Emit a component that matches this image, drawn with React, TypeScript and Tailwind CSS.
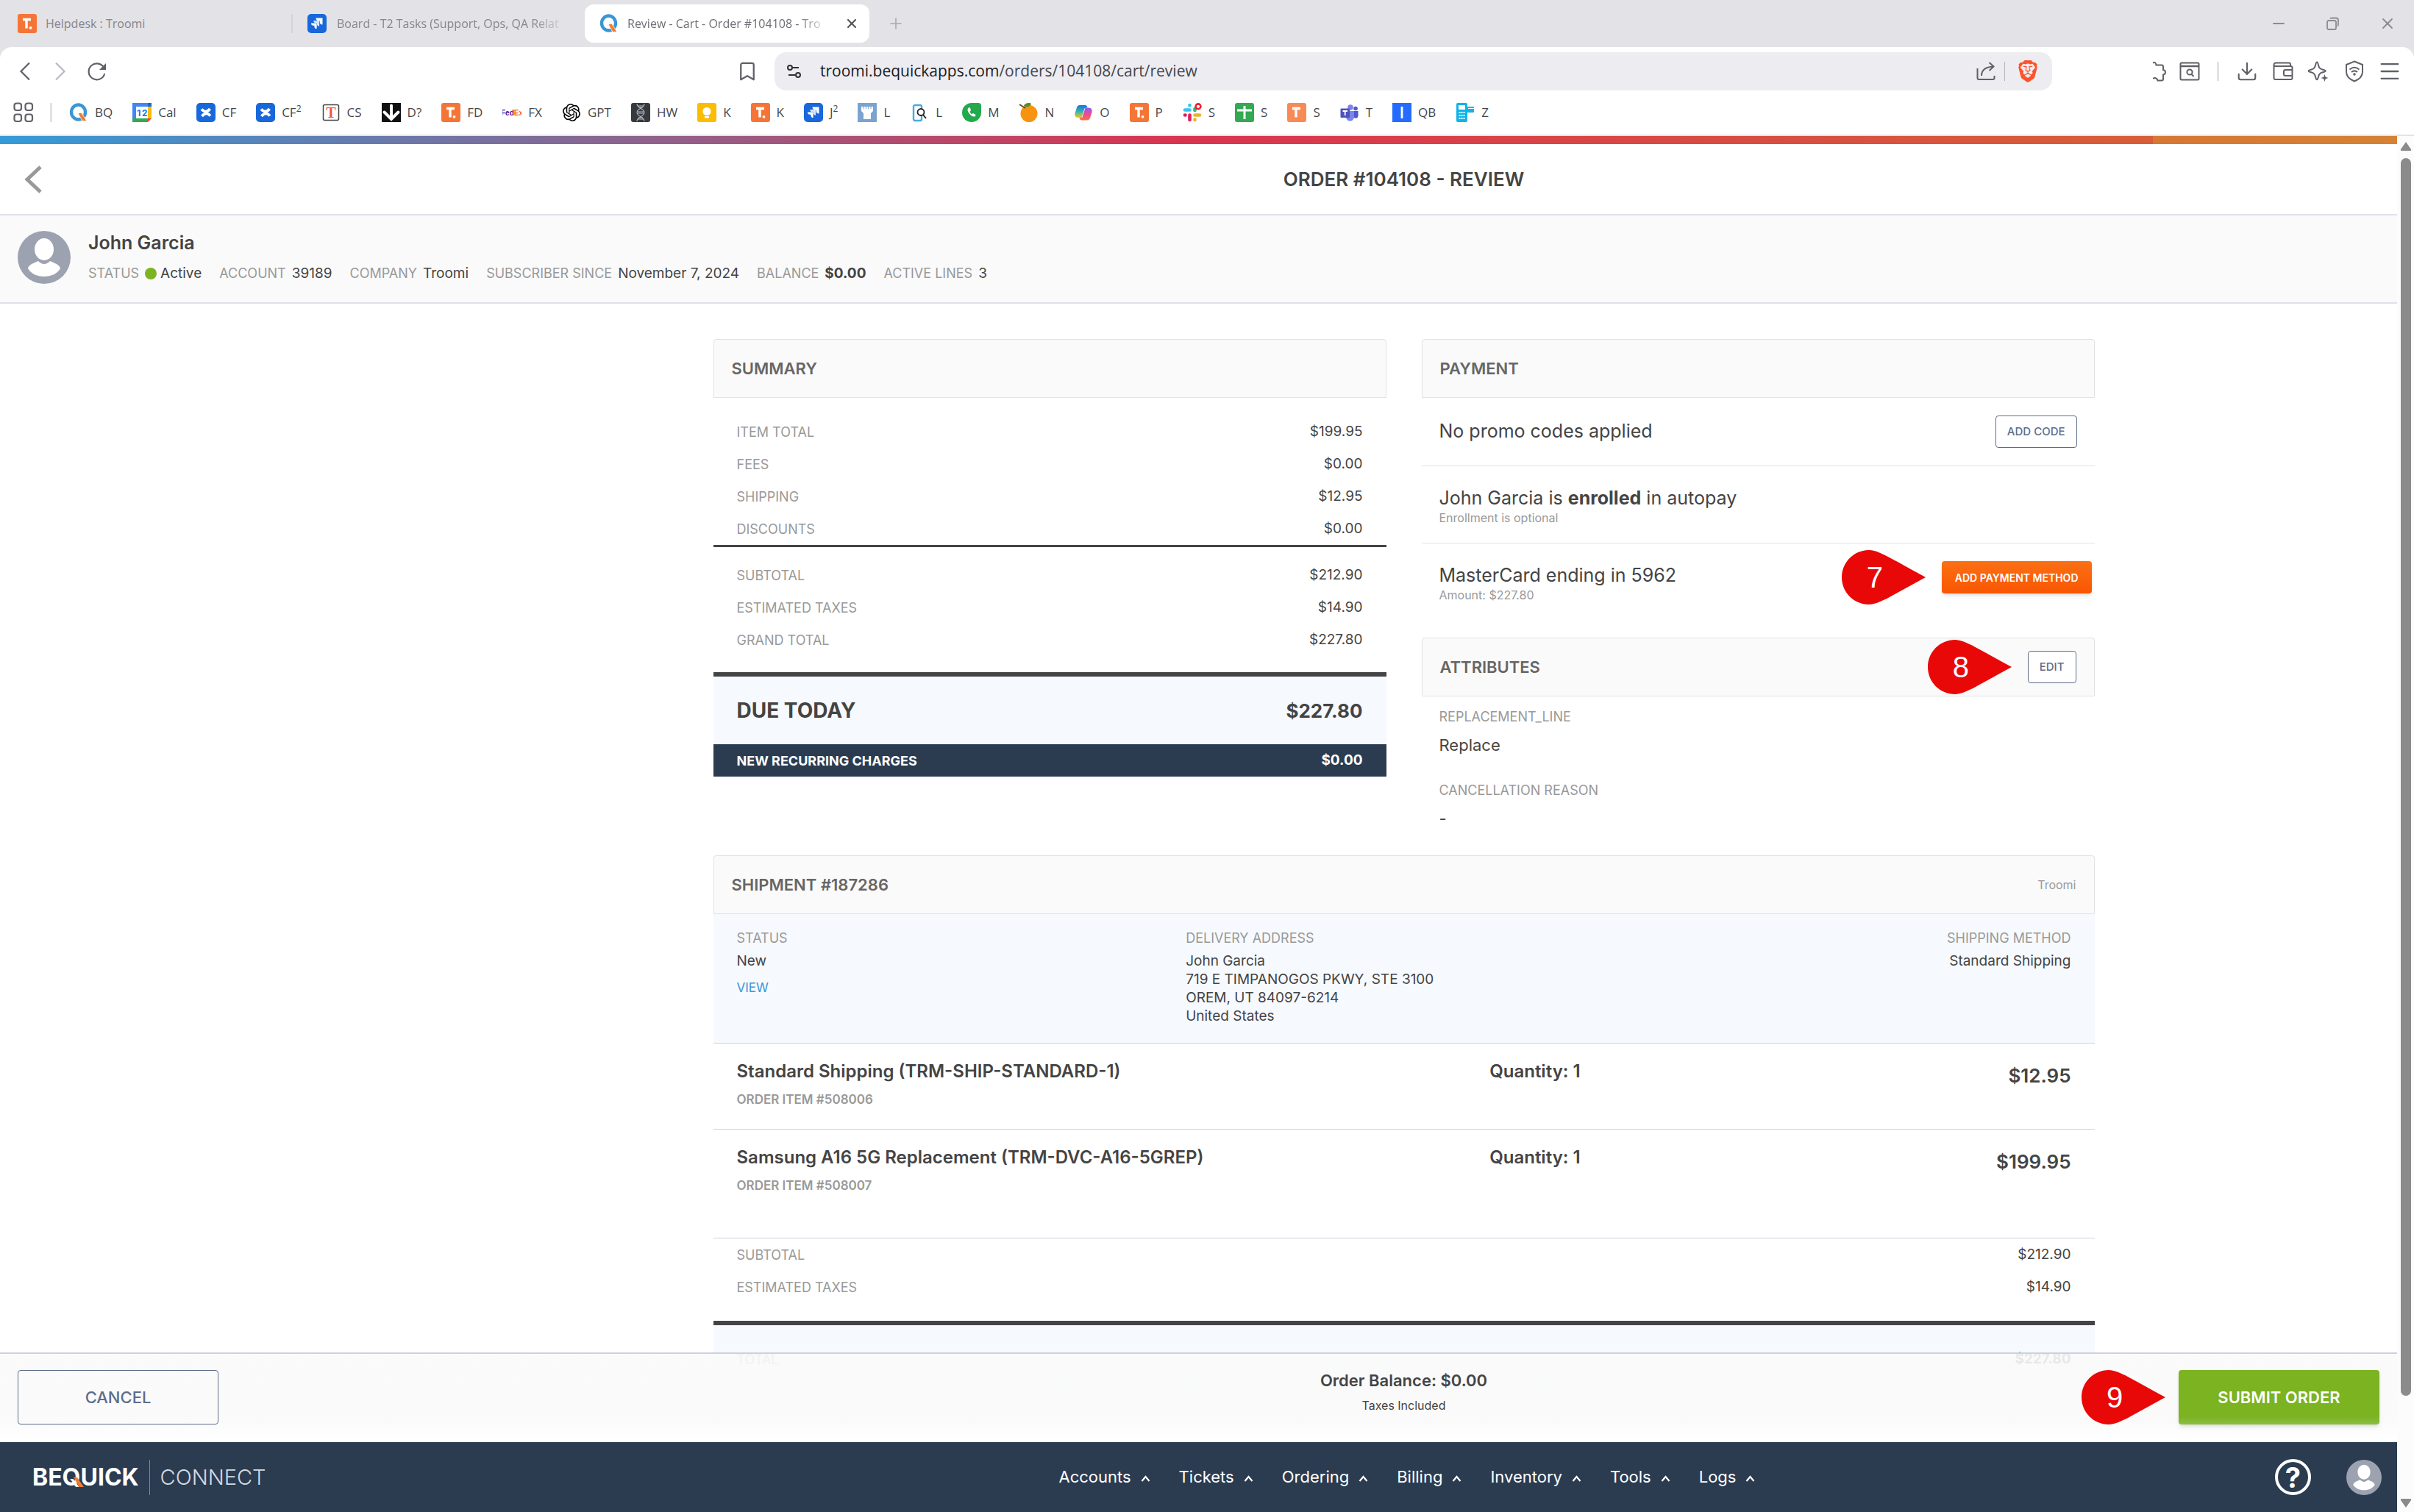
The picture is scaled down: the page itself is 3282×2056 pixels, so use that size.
import type { ReactNode } from "react";
import {
  Bookmark,
  Download,
  Menu,
  Minus,
  Plus,
  X,
} from "lucide-react";
import { SiBrave, SiOpenai } from "react-icons/si";

/* ---------- Favicons ---------- */

function TroomiIcon({ light = false }: { light?: boolean }) {
  return (
    <svg viewBox="0 0 26 26" className="size-[26px] shrink-0" aria-hidden="true">
      <rect width="26" height="26" rx="3" fill={light ? "#f88a55" : "#f57536"} />
      <path d="M7 7.5h11M12 7.5v12" stroke="#fff" strokeWidth="3.4" fill="none" />
      {!light && <circle cx="17.5" cy="18.8" r="1.9" fill="#fff" />}
    </svg>
  );
}

function BeQuickIcon() {
  return (
    <svg viewBox="0 0 26 26" className="size-[26px] shrink-0" aria-hidden="true">
      <ellipse cx="12.5" cy="12.5" rx="9.5" ry="10" fill="none" stroke="#3a97d3" strokeWidth="4.4" />
      <path d="M12 14l4.5-1 7.5 11.5h-6z" fill="#f07b2f" stroke="#fff" strokeWidth="0.8" />
    </svg>
  );
}

function JiraIcon() {
  return (
    <svg viewBox="0 0 26 26" className="size-[26px] shrink-0" aria-hidden="true">
      <rect width="26" height="26" rx="5" fill="#1868db" />
      <path d="M11.5 5.5h9v9c-2.400 0-3.800-1.500-3.800-3.600V9.300h-1.600c-2.100 0-3.600-1.400-3.600-3.800z" fill="#fff" />
      <path d="M8.300 9h7.800v7.800c-2.200 0-3.300-1.300-3.300-3.200v-1.300h-1.300c-1.900 0-3.200-1.100-3.200-3.300z" fill="#d5e3fa" />
      <path d="M5 12.500h7.600v7.600c-2.200 0-3.200-1.200-3.200-3.100v-1.300H8.100c-1.900 0-3.100-1-3.100-3.200z" fill="#fff" />
    </svg>
  );
}

function CalendarIcon() {
  return (
    <svg viewBox="0 0 26 26" className="size-[26px] shrink-0" aria-hidden="true">
      <rect width="21" height="21" fill="#4285f4" />
      <rect x="21" y="5" width="5" height="16" fill="#fbbc04" />
      <rect x="21" width="5" height="5" fill="#1967d2" />
      <rect y="21" width="21" height="5" fill="#34a853" />
      <path d="M21 21h5l-5 5z" fill="#ea4335" />
      <rect x="5" y="5" width="16" height="16" fill="#fff" />
      <text x="13" y="18" textAnchor="middle" fontSize="13" fontWeight="700" fontFamily="Roboto, sans-serif" fill="#1a73e8">
        12
      </text>
    </svg>
  );
}

function ConfluenceIcon() {
  return (
    <svg viewBox="0 0 26 26" className="size-[26px] shrink-0" aria-hidden="true">
      <rect width="26" height="26" rx="5" fill="#1868db" />
      <path d="M7 8.500c3 3.500 7 5 11.500-.5M19 17.500c-3-3.500-7-5-11.500.5" fill="none" stroke="#fff" strokeWidth="3.800" />
    </svg>
  );
}

function SerifTIcon() {
  return (
    <svg viewBox="0 0 26 26" className="size-[26px] shrink-0" aria-hidden="true">
      <rect x="2.500" y="2.500" width="21" height="21" rx="2" fill="#fff" stroke="#444" strokeWidth="1.500" />
      <text x="13" y="20" textAnchor="middle" fontSize="20" fontWeight="700" fontFamily="Liberation Serif, serif" fill="#f0563f">
        T
      </text>
    </svg>
  );
}

function DownArrowIcon() {
  return (
    <svg viewBox="0 0 26 26" className="size-[26px] shrink-0" aria-hidden="true">
      <rect width="26" height="26" fill="#111" />
      <path d="M13 3.500v18M3.500 12.500l9.500 9.500 9.500-9.500" fill="none" stroke="#fff" strokeWidth="4" strokeLinecap="round" />
    </svg>
  );
}

function FedExIcon() {
  return (
    <svg viewBox="0 0 26 26" className="size-[26px] shrink-0" aria-hidden="true">
      <text x="13" y="16.500" textAnchor="middle" fontSize="10" fontWeight="700" fontFamily="Liberation Sans, sans-serif">
        <tspan fill="#4d148c">Fed</tspan>
        <tspan fill="#ff6200">Ex</tspan>
      </text>
    </svg>
  );
}

function HelixIcon() {
  return (
    <svg viewBox="0 0 26 26" className="size-[26px] shrink-0" aria-hidden="true">
      <rect width="26" height="26" rx="3" fill="#36393d" />
      <path d="M8 1c0 7 10 6 10 12S8 18 8 25M18 1c0 7-10 6-10 12s10 5 10 12M9 4h8M10 6h6M9 12h8M9 14h8M10 20h6M9 22h8" fill="none" stroke="#b4b8bc" strokeWidth="1.100" />
    </svg>
  );
}

function KeepIcon() {
  return (
    <svg viewBox="0 0 26 26" className="size-[26px] shrink-0" aria-hidden="true">
      <rect width="26" height="26" rx="3" fill="#fbbc04" />
      <circle cx="13" cy="11.500" r="5.600" fill="#fff" />
      <rect x="10" y="18" width="6" height="2.600" fill="#fff" />
    </svg>
  );
}

function RookIcon() {
  return (
    <svg viewBox="0 0 26 26" className="size-[26px] shrink-0" aria-hidden="true">
      <rect width="26" height="26" fill="#7ba3d0" />
      <path d="M5 5h16v6l-3 3v8H8v-8l-3-3z" fill="#fff" />
      <path d="M8 4v4M11.300 4v4M14.600 4v4M18 4v4" stroke="#7ba3d0" strokeWidth="1" />
    </svg>
  );
}

function PhoneSearchIcon() {
  return (
    <svg viewBox="0 0 26 26" className="size-[26px] shrink-0" aria-hidden="true">
      <rect x="5" y="3" width="11" height="21" rx="2" fill="#fff" stroke="#4aa9e4" strokeWidth="2.400" />
      <circle cx="15" cy="12.500" r="4.500" fill="#fff" stroke="#222" strokeWidth="1.800" />
      <path d="M18 16l4 5" stroke="#222" strokeWidth="2" />
    </svg>
  );
}

function CallIcon() {
  return (
    <svg viewBox="0 0 26 26" className="size-[26px] shrink-0" aria-hidden="true">
      <path d="M26 4v9a13 13 0 1 1-13-13h9a4 4 0 0 1 4 4z" fill="#22a94b" />
      <path d="M9 6.500c-2 1.500-2 4 .5 7.500s6 5.500 8.500 4l.5-2-3.500-2-1.800 1.200c-1.500-1-2.200-2-2.700-3.400l1.500-1.500-1.200-4z" fill="#fff" />
    </svg>
  );
}

function OrangeIcon() {
  return (
    <svg viewBox="0 0 26 26" className="size-[26px] shrink-0" aria-hidden="true">
      <circle cx="14" cy="14.500" r="11.500" fill="#f79310" />
      <path d="M7 4c1-4 8-5 10-3-1 4-6 5-9 4z" fill="#5d8a2c" />
      <path d="M1 2l8 5" stroke="#6b4a2a" strokeWidth="2" />
    </svg>
  );
}

function CopilotIcon() {
  return (
    <svg viewBox="0 0 26 26" className="size-[26px] shrink-0" aria-hidden="true">
      <defs>
        <linearGradient id="copilot-a" x1="0" y1="0" x2="0" y2="1">
          <stop offset="0" stopColor="#1f6fe0" />
          <stop offset="0.500" stopColor="#2fb6b0" />
          <stop offset="1" stopColor="#f5c518" />
        </linearGradient>
        <linearGradient id="copilot-b" x1="0" y1="0" x2="0" y2="1">
          <stop offset="0" stopColor="#8b5cf6" />
          <stop offset="0.500" stopColor="#ec4899" />
          <stop offset="1" stopColor="#f9733a" />
        </linearGradient>
      </defs>
      <path d="M8 3h7c2 0 3 1 3.500 3l-4 1.500L10.500 20H6c-4 0-5-3-4.500-6L4 6c.8-2 2-3 4-3z" fill="url(#copilot-a)" />
      <path d="M18 23.500h-7c-2 0-3-1-3.500-3l4-1L15.500 6.500H20c4 0 5 3 4.500 6L22 20.500c-.8 2-2 3-4 3z" fill="url(#copilot-b)" />
    </svg>
  );
}

function SlackIcon() {
  return (
    <svg viewBox="0 0 26 26" className="size-[26px] shrink-0" aria-hidden="true">
      <g strokeWidth="4.600" strokeLinecap="round">
        <path d="M3 9.500h6.500M9.500 3v.5" stroke="#36c5f0" />
        <path d="M16.500 8v2" stroke="#2eb67d" />
        <path d="M16.500 16.500H23M16.500 22.500v.5" stroke="#ecb22e" />
        <path d="M9.500 16.500V23M3 16.500h.5" stroke="#e01e5a" />
      </g>
      <circle cx="21" cy="4.800" r="3.400" fill="#fff" stroke="#f01e2d" strokeWidth="2.600" />
    </svg>
  );
}

function SheetIcon() {
  return (
    <svg viewBox="0 0 26 26" className="size-[26px] shrink-0" aria-hidden="true">
      <rect width="26" height="26" rx="3" fill="#34a853" />
      <path d="M3 10h20M13 4v18" stroke="#fff" strokeWidth="3" />
    </svg>
  );
}

function TeamsIcon() {
  return (
    <svg viewBox="0 0 26 26" className="size-[26px] shrink-0" aria-hidden="true">
      <circle cx="21" cy="7.500" r="2.800" fill="#5059c9" />
      <circle cx="14" cy="6" r="3.800" fill="#7b83eb" />
      <path d="M18 11h6.500v6.500a3.500 3.500 0 0 1-6.500 1.500z" fill="#5059c9" />
      <path d="M8 11h11v8a5.500 5.500 0 0 1-11 0z" fill="#7b83eb" />
      <rect x="0.500" y="7.500" width="12.500" height="12.500" rx="1" fill="#4b53bc" />
      <path d="M3.500 11h6.500M6.700 11v6" stroke="#fff" strokeWidth="1.800" />
    </svg>
  );
}

function BlueBarIcon() {
  return (
    <svg viewBox="0 0 26 26" className="size-[26px] shrink-0" aria-hidden="true">
      <rect width="26" height="26" fill="#236cff" />
      <path d="M13 5v16" stroke="#fff" strokeWidth="2.800" />
    </svg>
  );
}

function TerminalIcon() {
  return (
    <svg viewBox="0 0 26 26" className="size-[26px] shrink-0" aria-hidden="true">
      <rect x="1" width="15" height="26" rx="2" fill="#12b3e6" />
      <rect x="4" y="3" width="9" height="6" fill="#fff" />
      <path d="M4.500 13h8M4.500 17h8M4.500 21h8" stroke="#fff" strokeWidth="2" strokeDasharray="2 1" />
      <rect x="16" y="5" width="9" height="8" rx="1" fill="#12b3e6" />
      <path d="M17 7.500h8" stroke="#fff" strokeWidth="1" />
    </svg>
  );
}

/* ---------- Toolbar icons ---------- */

function ReloadIcon() {
  return (
    <svg viewBox="0 0 28 28" className="size-7" fill="none" stroke="#5f6167" strokeWidth="2.200" aria-hidden="true">
      <path d="M24 18a11 11 0 1 1-.5-8.500" strokeLinecap="round" />
      <path d="M26 3v9h-9z" fill="#5f6167" stroke="none" />
    </svg>
  );
}

function TuneIcon() {
  return (
    <svg viewBox="0 0 22 20" className="h-5 w-[22px]" fill="none" stroke="#2f3136" strokeWidth="2" aria-hidden="true">
      <circle cx="5" cy="5" r="3" />
      <path d="M8 5h9M3 15h9" />
      <circle cx="16" cy="15" r="3" />
    </svg>
  );
}

function ShareIcon() {
  return (
    <svg viewBox="0 0 26 26" className="size-[26px]" fill="none" stroke="#5f6167" strokeWidth="2" aria-hidden="true">
      <path d="M1.500 9v13a2 2 0 0 0 2 2h19a2 2 0 0 0 2-2v-3" />
      <path d="M7 19c0-7 5-12 16-12.500M17.500 1l6 5.500-6 5.500" />
    </svg>
  );
}

function PuzzleIcon() {
  return (
    <svg viewBox="0 0 18 28" className="h-7 w-[18px]" fill="none" stroke="#5f6167" strokeWidth="2" aria-hidden="true">
      <path d="M0 3c2-2.500 4-1 4.500 2.500H12c1.500 0 2 .5 2 2v4.500c4 .5 4 6 0 6.500v6c0 1.500-.5 2-2 2H6.500C6 23 2 22 0 24" />
    </svg>
  );
}

function PageSearchIcon() {
  return (
    <svg viewBox="0 0 28 26" className="h-[26px] w-7" fill="none" stroke="#5f6167" strokeWidth="2" aria-hidden="true">
      <rect x="1.500" y="1.500" width="25" height="23" rx="1.500" />
      <path d="M1 6h26" strokeWidth="2.500" />
      <circle cx="14" cy="14" r="3.600" />
      <path d="M16.500 17l3 3" />
    </svg>
  );
}

function WalletIcon() {
  return (
    <svg viewBox="0 0 28 26" className="h-[26px] w-7" fill="none" stroke="#5f6167" strokeWidth="2" aria-hidden="true">
      <path d="M1.500 5v17a2 2 0 0 0 2 2h21a2 2 0 0 0 2-2V8a2 2 0 0 0-2-2h-21a2 2 0 0 1-2-2 2.500 2.500 0 0 1 2.500-2.500h18a2 2 0 0 1 2 2V6" />
      <path d="M26 11h-9a2 2 0 0 0-2 2v4a2 2 0 0 0 2 2h9" />
    </svg>
  );
}

function SparkleIcon() {
  return (
    <svg viewBox="0 0 28 28" className="size-7" fill="none" stroke="#5f6167" strokeWidth="2" aria-hidden="true">
      <path d="M12 1.500c1 0 1.300 1 2 4 1 4 2 5 6 6.200 5 1.300 5 2.300 0 3.600-4 1.200-5 2.200-6 6.200-1.300 5-2.700 5-4 0-1-4-2-5-6-6.200-5-1.300-5-2.300 0-3.600 4-1.200 5-2.200 6-6.200.7-3 1-4 2-4z" />
      <path d="M22.500 18l1.300 3.700L27.500 23l-3.700 1.300-1.300 3.700-1.300-3.700-3.700-1.300 3.700-1.300z" fill="#5f6167" stroke="none" />
    </svg>
  );
}

function ShieldIcon() {
  return (
    <svg viewBox="0 0 26 30" className="h-[30px] w-[26px]" fill="none" stroke="#5f6167" strokeWidth="2" aria-hidden="true">
      <path d="M13 1.500l11 4.500v10c0 6-5 10-11 12.500C7 26 2 22 2 16V6z" />
      <path d="M6.500 12.500c4-3.300 9-3.300 13 0M9 16c2.500-2 5.500-2 8 0" />
      <circle cx="13" cy="19" r="1.800" fill="#5f6167" stroke="none" />
    </svg>
  );
}

function AppsIcon() {
  return (
    <svg viewBox="0 0 28 28" className="size-7" fill="none" stroke="#5f6167" strokeWidth="2.200" aria-hidden="true">
      <rect x="1.500" y="1.500" width="9.500" height="9.500" rx="3" />
      <rect x="16.500" y="1.500" width="9.500" height="9.500" rx="3" />
      <rect x="1.500" y="16.500" width="9.500" height="9.500" rx="3" />
      <rect x="16.500" y="16.500" width="9.500" height="9.500" rx="3" />
    </svg>
  );
}

function Chevron({ dir, color }: { dir: "left" | "right"; color: string }) {
  return (
    <svg viewBox="0 0 16 26" className="h-[26px] w-4" fill="none" stroke={color} strokeWidth="2.200" aria-hidden="true">
      <path d={dir === "left" ? "M14 1.500L2.500 13 14 24.500" : "M2 1.500L13.500 13 2 24.500"} />
    </svg>
  );
}

function Avatar({ className }: { className: string }) {
  return (
    <svg viewBox="0 0 72 72" className={className} aria-hidden="true">
      <circle cx="36" cy="36" r="36" fill="#9ca2b0" />
      <ellipse cx="36" cy="25" rx="13" ry="15" fill="#fff" />
      <path d="M28 41c-7 3-13 5-14 10 4 7 12 11 22 11s18-4 22-11c-1-5-7-7-14-10-2 2-5 4-8 4s-6-2-8-4z" fill="#fff" />
    </svg>
  );
}

/* ---------- Browser chrome ---------- */

const bookmarks: { label: string; sup?: string; icon: ReactNode }[] = [
  { label: "BQ", icon: <BeQuickIcon /> },
  { label: "Cal", icon: <CalendarIcon /> },
  { label: "CF", icon: <ConfluenceIcon /> },
  { label: "CF", sup: "2", icon: <ConfluenceIcon /> },
  { label: "CS", icon: <SerifTIcon /> },
  { label: "D?", icon: <DownArrowIcon /> },
  { label: "FD", icon: <TroomiIcon /> },
  { label: "FX", icon: <FedExIcon /> },
  { label: "GPT", icon: <SiOpenai className="size-[26px] p-px text-black" /> },
  { label: "HW", icon: <HelixIcon /> },
  { label: "K", icon: <KeepIcon /> },
  { label: "K", icon: <TroomiIcon /> },
  { label: "J", sup: "2", icon: <JiraIcon /> },
  { label: "L", icon: <RookIcon /> },
  { label: "L", icon: <PhoneSearchIcon /> },
  { label: "M", icon: <CallIcon /> },
  { label: "N", icon: <OrangeIcon /> },
  { label: "O", icon: <CopilotIcon /> },
  { label: "P", icon: <TroomiIcon /> },
  { label: "S", icon: <SlackIcon /> },
  { label: "S", icon: <SheetIcon /> },
  { label: "S", icon: <TroomiIcon light /> },
  { label: "T", icon: <TeamsIcon /> },
  { label: "QB", icon: <BlueBarIcon /> },
  { label: "Z", icon: <TerminalIcon /> },
];

function TabStrip() {
  return (
    <div className="flex h-16 items-center bg-[#e3e2e7] text-[16px] text-[#85858b]">
      <div className="flex w-[398px] items-center gap-3 border-r-2 border-[#d4d3d9] pl-6">
        <TroomiIcon />
        <span>Helpdesk : Troomi</span>
      </div>
      <div className="flex w-[397px] items-center gap-[14px] pr-6 pl-5">
        <JiraIcon />
        <span className="min-w-0 flex-1 overflow-hidden mask-r-from-85% whitespace-nowrap">
          Board - T2 Tasks (Support, Ops, QA Relat
        </span>
      </div>
      <div className="flex h-[52px] w-[387px] items-center gap-3 rounded-xl bg-white pr-[14px] pl-5 text-[#6d6e74]">
        <BeQuickIcon />
        <span className="min-w-0 flex-1 overflow-hidden mask-r-from-85% whitespace-nowrap">
          Review - Cart - Order #104108 - Tro
        </span>
        <button type="button" aria-label="Close tab" className="ml-2">
          <X className="size-5 text-[#55565b]" strokeWidth={2.6} />
        </button>
      </div>
      <button type="button" aria-label="New tab" className="ml-6">
        <Plus className="size-6 text-[#a9a9af]" strokeWidth={1.6} />
      </button>
      <div className="ml-auto flex items-center gap-[50px] pr-6 text-[#8b8b90]">
        <button type="button" aria-label="Minimize">
          <Minus className="size-6" strokeWidth={1.8} />
        </button>
        <button type="button" aria-label="Restore">
          <svg viewBox="0 0 24 24" className="size-6" fill="none" stroke="currentColor" strokeWidth="1.800" aria-hidden="true">
            <rect x="4" y="8" width="12" height="12" rx="2" />
            <path d="M8 5.500c.3-.7 1-1 2-1h6c2 0 3 1 3 3v6c0 1-.3 1.700-1 2" />
          </svg>
        </button>
        <button type="button" aria-label="Close window">
          <X className="size-6" strokeWidth={1.8} />
        </button>
      </div>
    </div>
  );
}

function Toolbar() {
  return (
    <div className="bg-[#e3e2e7]">
      <div className="flex h-[66px] items-center rounded-t-2xl bg-white pr-4 pl-[26px]">
        <button type="button" aria-label="Back">
          <Chevron dir="left" color="#5f6167" />
        </button>
        <button type="button" aria-label="Forward" className="ml-8">
          <Chevron dir="right" color="#b9babf" />
        </button>
        <button type="button" aria-label="Reload" className="ml-7">
          <ReloadIcon />
        </button>
        <div className="ml-[855px] flex min-w-0 flex-1 items-center gap-[22px]">
          <button type="button" aria-label="Bookmark this page">
            <Bookmark className="size-[30px] text-[#5f6167]" strokeWidth={1.8} />
          </button>
          <div className="flex h-[52px] min-w-0 flex-1 items-center rounded-2xl bg-[#edecf1] px-4">
            <TuneIcon />
            <a href="#" className="ml-6 text-[21px] text-[#46474c]">
              <span className="text-[#1b1c1f]">troomi.bequickapps.com</span>/orders/104108/cart/review
            </a>
            <div className="ml-auto flex items-center gap-3 pr-[2px]">
              <button type="button" aria-label="Share">
                <ShareIcon />
              </button>
              <span className="h-[26px] w-px bg-[#b4b4ba]" />
              <button type="button" aria-label="Brave Shields" className="ml-1">
                <SiBrave className="size-[30px] text-[#fb542b]" />
              </button>
            </div>
          </div>
        </div>
        <div className="ml-[137px] flex items-center">
          <button type="button" aria-label="Extensions">
            <PuzzleIcon />
          </button>
          <button type="button" aria-label="Search page" className="ml-[18px]">
            <PageSearchIcon />
          </button>
          <span className="mx-[23px] h-[26px] w-[3px] bg-[#e3e2e7]" />
          <button type="button" aria-label="Downloads">
            <Download className="size-[30px] text-[#5f6167]" strokeWidth={1.7} />
          </button>
          <button type="button" aria-label="Wallet" className="ml-5">
            <WalletIcon />
          </button>
          <button type="button" aria-label="Leo AI" className="ml-5">
            <SparkleIcon />
          </button>
          <button type="button" aria-label="VPN" className="ml-[22px]">
            <ShieldIcon />
          </button>
          <button type="button" aria-label="Menu" className="ml-[18px]">
            <Menu className="size-[34px] text-[#5f6167]" strokeWidth={1.6} />
          </button>
        </div>
      </div>
    </div>
  );
}

function BookmarksBar() {
  return (
    <div className="flex h-[55px] items-center border-b-2 border-[#e3e2e7] bg-white pb-2 pl-[18px]">
      <button type="button" aria-label="All apps">
        <AppsIcon />
      </button>
      <span className="mr-[23px] ml-[22px] h-[26px] w-[3px] bg-[#e3e2e7]" />
      <nav className="flex gap-[27px] text-[17px] text-[#46474c]">
        {bookmarks.map((b, i) => (
          <a key={i} href="#" className="flex items-center gap-[9px]">
            {b.icon}
            <span className="flex">
              {b.label}
              {b.sup && <span className="text-[12px] leading-4">{b.sup}</span>}
            </span>
          </a>
        ))}
      </nav>
    </div>
  );
}

/* ---------- Page parts ---------- */

function Marker({ n, className }: { n: number; className: string }) {
  return (
    <span className={`absolute top-1/2 right-full h-[74px] w-[114px] -translate-y-1/2 ${className}`}>
      <svg viewBox="0 0 114 74" className="absolute inset-0" aria-hidden="true">
        <path d="M37 0C16.500 0 0 16.500 0 37s16.500 37 37 37c14 0 34-14 77-37C71 14 51 0 37 0z" fill="#e90808" />
      </svg>
      <span className="absolute inset-y-0 left-0 flex w-[90px] items-center justify-center font-[Liberation_Sans,sans-serif] text-[40px] font-normal text-white">
        {n}
      </span>
    </span>
  );
}

function PanelHeader({ title, children }: { title: string; children?: ReactNode }) {
  return (
    <header className="flex h-20 items-center justify-between rounded-t border border-[#e2e2e2] bg-[#fafafa] px-6">
      <h2 className="text-[22px] font-semibold text-[#666]">{title}</h2>
      {children}
    </header>
  );
}

function Row({ label, value }: { label: string; value: string }) {
  return (
    <div className="flex h-11 items-center justify-between px-8">
      <dt className="text-[18px] text-[#999]">{label}</dt>
      <dd className="text-[19px]">{value}</dd>
    </div>
  );
}

function OutlineButton({ children }: { children: ReactNode }) {
  return (
    <button type="button" className="h-11 rounded border border-[#5d6d88] bg-white px-[15px] text-[15px] font-medium text-[#5d6d88]">
      {children}
    </button>
  );
}

function AccountBar() {
  const facts: [string, string][] = [
    ["ACCOUNT", "39189"],
    ["COMPANY", "Troomi"],
    ["SUBSCRIBER SINCE", "November 7, 2024"],
    ["BALANCE", "$0.00"],
    ["ACTIVE LINES", "3"],
  ];
  return (
    <section className="flex h-[120px] items-center gap-6 border-b-2 border-[#dfe1ea] bg-[#fafafa] px-6 pb-1">
      <Avatar className="size-[72px]" />
      <div className="flex flex-col gap-4">
        <h1 className="text-[25px] leading-7 font-semibold">John Garcia</h1>
        <dl className="flex gap-6 text-[19px] leading-6">
          <div className="flex items-center gap-2">
            <dt className="text-[18px] text-[#999]">STATUS</dt>
            <dd className="flex items-center gap-[5px]">
              <span className="size-4 rounded-full bg-[#7bb321]" />
              Active
            </dd>
          </div>
          {facts.map(([k, v]) => (
            <div key={k} className="flex items-center gap-2">
              <dt className="text-[18px] text-[#999]">{k}</dt>
              <dd className={k === "BALANCE" ? "font-bold" : "font-normal"}>{v}</dd>
            </div>
          ))}
        </dl>
      </div>
    </section>
  );
}

function Summary() {
  return (
    <section>
      <PanelHeader title="SUMMARY" />
      <dl className="border-b-3 border-[#444] pt-6">
        <Row label="ITEM TOTAL" value="$199.95" />
        <Row label="FEES" value="$0.00" />
        <Row label="SHIPPING" value="$12.95" />
        <Row label="DISCOUNTS" value="$0.00" />
      </dl>
      <dl className="border-b-6 border-[#444] pt-4 pb-[22px]">
        <Row label="SUBTOTAL" value="$212.90" />
        <Row label="ESTIMATED TAXES" value="$14.90" />
        <Row label="GRAND TOTAL" value="$227.80" />
      </dl>
      <dl className="font-bold">
        <div className="flex h-[92px] items-center justify-between bg-[#f6f9fe] px-8">
          <dt className="text-[28px]">DUE TODAY</dt>
          <dd className="text-[26px]">$227.80</dd>
        </div>
        <div className="flex h-11 items-center justify-between bg-[#2b3c51] px-8 text-white">
          <dt className="text-[18px]">NEW RECURRING CHARGES</dt>
          <dd className="text-[19px]">$0.00</dd>
        </div>
      </dl>
    </section>
  );
}

function Payment() {
  return (
    <section>
      <PanelHeader title="PAYMENT" />
      <div className="flex h-[92px] items-center justify-between px-6">
        <p className="text-[25px]">No promo codes applied</p>
        <OutlineButton>ADD CODE</OutlineButton>
      </div>
      <div className="border-t border-[#e2e2e2] px-6 pt-7 pb-[22px]">
        <p className="text-[25px] leading-[30px]">
          John Garcia is <b>enrolled</b> in autopay
        </p>
        <p className="text-[16px] leading-6 text-[#999]">Enrollment is optional</p>
      </div>
      <div className="flex items-start justify-between border-t border-[#e2e2e2] pr-1 pb-[22px] pl-6">
        <div className="pt-7">
          <p className="text-[25px] leading-[30px]">MasterCard ending in 5962</p>
          <p className="text-[16px] leading-6 text-[#999]">Amount: $227.80</p>
        </div>
        <div className="relative mt-6">
          <button
            type="button"
            className="h-11 rounded bg-linear-to-b from-[#fb7014] to-[#f95501] px-[18px] text-[14px] font-semibold text-white shadow-md"
          >
            ADD PAYMENT METHOD
          </button>
          <Marker n={7} className="mr-[22px]" />
        </div>
      </div>
    </section>
  );
}

function Attributes() {
  return (
    <section className="mt-6">
      <PanelHeader title="ATTRIBUTES">
        <div className="relative">
          <OutlineButton>EDIT</OutlineButton>
          <Marker n={8} className="mr-[22px]" />
        </div>
      </PanelHeader>
      <dl className="px-6 pt-4">
        <dt className="text-[18px] leading-6 text-[#999]">REPLACEMENT_LINE</dt>
        <dd className="mt-3 text-[22px] leading-7">Replace</dd>
        <dt className="mt-9 text-[18px] leading-6 text-[#999]">CANCELLATION REASON</dt>
        <dd className="mt-3 text-[22px] leading-7">-</dd>
      </dl>
    </section>
  );
}

function ItemRow({ name, item, price, pb }: { name: string; item: string; price: string; pb: string }) {
  return (
    <tr className="border-b border-[#ccd1df] align-top font-semibold">
      <td className={`pt-[22px] pl-8 ${pb}`}>
        <div className="text-[24px] leading-8">{name}</div>
        <div className="mt-[10px] text-[17px] leading-6 text-[#999]">{item}</div>
      </td>
      <td className="pt-[22px] pl-1 text-[24px] leading-8">Quantity: 1</td>
      <td className="pt-7 pr-8 text-right text-[26px] leading-8">{price}</td>
    </tr>
  );
}

function Shipment() {
  return (
    <section className="mt-9">
      <PanelHeader title="SHIPMENT #187286">
        <span className="text-[16px] text-[#999]">Troomi</span>
      </PanelHeader>
      <div className="grid grid-cols-3 border-b border-[#ccd1df] bg-[#f6f9fe] px-8 pt-5 pb-6 text-[19px] leading-[25px]">
        <div>
          <h3 className="mb-[6px] text-[18px] text-[#999]">STATUS</h3>
          <p>New</p>
          <a href="#" className="mt-3 inline-block text-[17px] text-[#3a97d3]">
            VIEW
          </a>
        </div>
        <div className="pl-[6px]">
          <h3 className="mb-[6px] text-[18px] text-[#999]">DELIVERY ADDRESS</h3>
          <address className="not-italic">
            John Garcia
            <br />
            719 E TIMPANOGOS PKWY, STE 3100
            <br />
            OREM, UT 84097-6214
            <br />
            United States
          </address>
        </div>
        <div className="text-right">
          <h3 className="mb-[6px] text-[18px] text-[#999]">SHIPPING METHOD</h3>
          <p>Standard Shipping</p>
        </div>
      </div>
      <table className="w-full table-fixed border-collapse">
        <colgroup>
          <col className="w-[56%]" />
          <col className="w-[22%]" />
          <col className="w-[22%]" />
        </colgroup>
        <tbody>
          <ItemRow name="Standard Shipping (TRM-SHIP-STANDARD-1)" item="ORDER ITEM #508006" price="$12.95" pb="pb-7" />
          <ItemRow name="Samsung A16 5G Replacement (TRM-DVC-A16-5GREP)" item="ORDER ITEM #508007" price="$199.95" pb="pb-[59px]" />
        </tbody>
      </table>
      <dl className="border-b-6 border-[#444] pb-6">
        <Row label="SUBTOTAL" value="$212.90" />
        <Row label="ESTIMATED TAXES" value="$14.90" />
      </dl>
      <dl className="flex h-[92px] items-center justify-between bg-[#f6f9fe] px-8">
        <dt className="text-[18px] text-[#999]">TOTAL</dt>
        <dd className="text-[19px] font-bold">$227.80</dd>
      </dl>
    </section>
  );
}

function ActionBar() {
  return (
    <div className="absolute inset-x-0 bottom-0 flex h-[122px] justify-between border-t-2 border-[#ccd1df] bg-linear-to-b from-[#fafafa]/90 from-75% to-white px-6 pt-[22px]">
      <div className="w-[831px]">
        <button type="button" className="h-[74px] w-[273px] rounded border border-[#5d6d88] text-[22px] font-medium text-[#5d6d88]">
          CANCEL
        </button>
      </div>
      <div className="flex-1 text-center">
        <p className="text-[22px] leading-7 font-semibold">Order Balance: $0.00</p>
        <p className="mt-2 text-[16px] leading-6">Taxes Included</p>
      </div>
      <div className="relative h-[74px] w-[273px]">
        <button
          type="button"
          className="size-full rounded bg-linear-to-b from-[#7bb321] from-85% to-[#8cbd42] text-[22px] font-semibold text-white shadow-md"
        >
          SUBMIT ORDER
        </button>
        <Marker n={9} className="mr-[18px]" />
      </div>
    </div>
  );
}

function Footer() {
  const menus = ["Accounts", "Tickets", "Ordering", "Billing", "Inventory", "Tools", "Logs"];
  return (
    <footer className="flex h-[95px] shrink-0 items-center bg-[#2b3c51] text-white">
      <a href="#" className="flex w-[733px] items-center pl-11">
        <span className="relative text-[32px] font-bold">
          BEQUICK
          <svg viewBox="0 0 14 14" className="absolute top-6 left-14 size-[14px]" aria-hidden="true">
            <path d="M0 0h5l9 13H8z" fill="#f07b2f" />
          </svg>
        </span>
        <span className="mx-[14px] h-12 w-px bg-[#7d8a9b]" />
        <span className="text-[29px] font-light text-[#d5dae0]">CONNECT</span>
      </a>
      <nav className="flex flex-1 justify-center gap-[39px] text-[22px]">
        {menus.map((m) => (
          <button key={m} type="button" className="flex items-center gap-[13px]">
            {m}
            <svg viewBox="0 0 13 9" className="mt-1 h-[9px] w-[13px]" fill="none" stroke="#fff" strokeWidth="2.200" aria-hidden="true">
              <path d="M1.500 8l5-6 5 6" />
            </svg>
          </button>
        ))}
      </nav>
      <div className="flex items-center gap-12 pr-[21px]">
        <button type="button" aria-label="Help" className="flex size-[49px] items-center justify-center rounded-full border-4 border-white text-[38px] leading-none font-bold">
          ?
        </button>
        <button type="button" aria-label="Profile">
          <Avatar className="size-12" />
        </button>
      </div>
    </footer>
  );
}

function Scrollbar() {
  return (
    <div className="flex w-[23px] shrink-0 flex-col items-center bg-[#fcfcfc] pt-2 pb-[6px]" aria-hidden="true">
      <svg viewBox="0 0 16 12" className="h-3 w-4">
        <path d="M8 0l7 10c.6 1 0 2-1 2H2c-1 0-1.600-1-1-2z" fill="#8b8b8b" />
      </svg>
      <div className="mt-[10px] w-[14px] grow-[12] rounded-full bg-[#8b8b8b]" />
      <div className="grow" />
      <svg viewBox="0 0 16 12" className="h-3 w-4">
        <path d="M8 12L1 2C.4 1 1 0 2 0h12c1 0 1.600 1 1 2z" fill="#8b8b8b" />
      </svg>
    </div>
  );
}

export default function App() {
  return (
    <div className="flex h-screen flex-col overflow-hidden bg-white font-[Open_Sans,Noto_Sans,sans-serif]">
      <TabStrip />
      <Toolbar />
      <BookmarksBar />
      <div className="flex min-h-0 flex-1 font-[Inter,sans-serif] text-[#444]">
        <div className="flex min-w-0 flex-1 flex-col">
          <div className="relative min-h-0 flex-1 overflow-hidden">
            <div className="h-[11px] bg-[linear-gradient(to_right,#349bd8_0%,#b04d70_37%,#d83550_49%,#d75e38_89.8%,#d67735_89.8%,#d58235_100%)]" />
            <div className="flex h-[97px] items-center border-b-2 border-[#dfe1ea]">
              <div className="w-[558px] pl-8">
                <button type="button" aria-label="Go back" className="block">
                  <svg viewBox="0 0 26 38" className="h-[38px] w-[26px]" fill="none" stroke="#999" strokeWidth="5" aria-hidden="true">
                    <path d="M23 2L5 19l18 17" />
                  </svg>
                </button>
              </div>
              <p className="flex-1 text-center text-[26px] font-semibold">ORDER #104108 - REVIEW</p>
            </div>
            <AccountBar />
            <main className="pt-12 pl-[558px]">
              <div className="mx-auto max-w-[1878px]">
                <div className="grid grid-cols-2 gap-12">
                  <Summary />
                  <div>
                    <Payment />
                    <Attributes />
                  </div>
                </div>
                <Shipment />
              </div>
            </main>
            <ActionBar />
          </div>
          <Footer />
        </div>
        <Scrollbar />
      </div>
    </div>
  );
}
